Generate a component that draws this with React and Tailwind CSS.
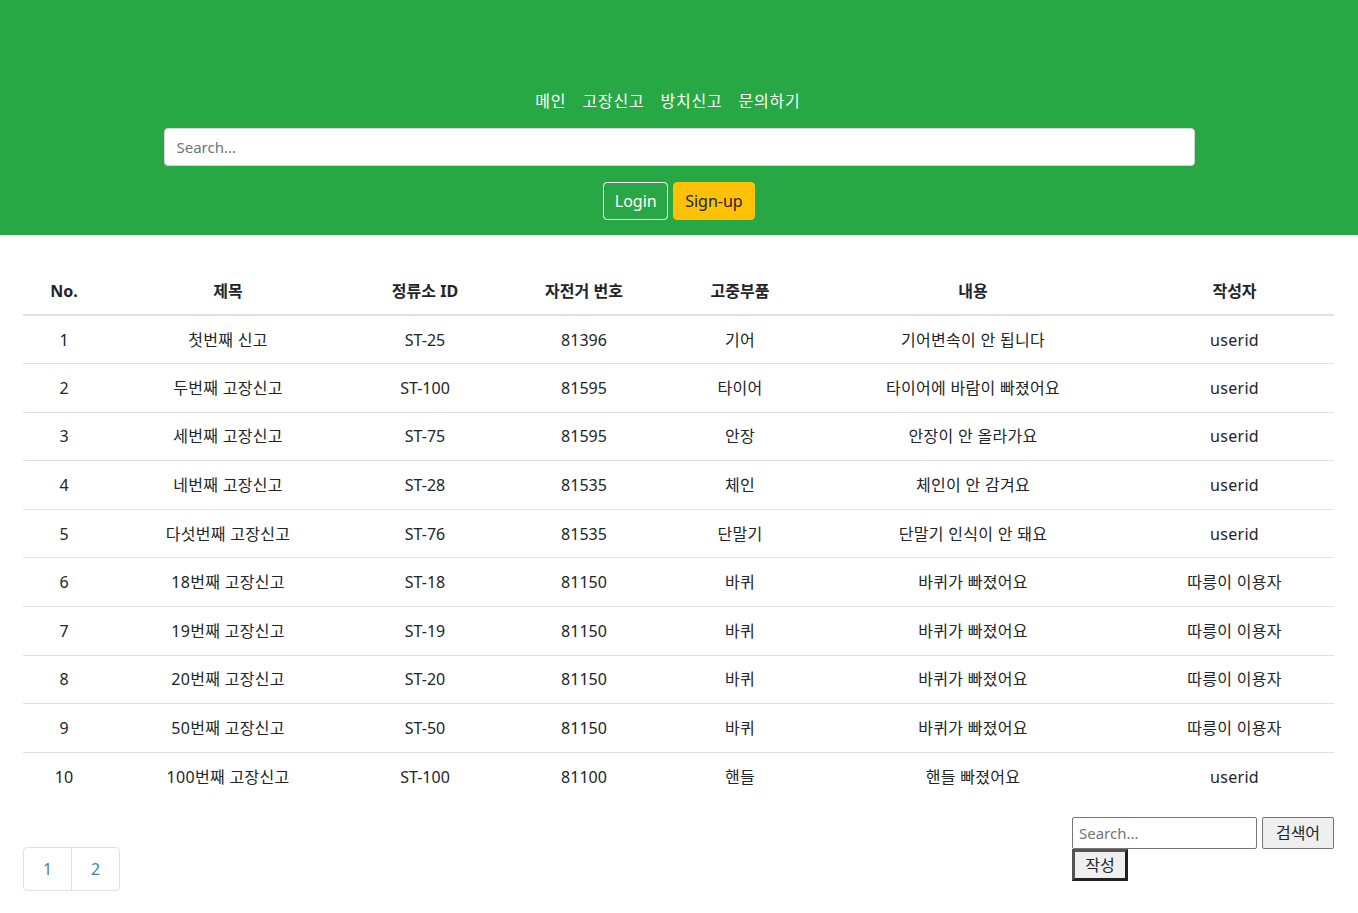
import { useState } from "react";

const reports = [
  { no: 1, title: "첫번째 신고", station: "ST-25", bike: "81396", part: "기어", content: "기어변속이 안 됩니다", writer: "userid" },
  { no: 2, title: "두번째 고장신고", station: "ST-100", bike: "81595", part: "타이어", content: "타이어에 바람이 빠졌어요", writer: "userid" },
  { no: 3, title: "세번째 고장신고", station: "ST-75", bike: "81595", part: "안장", content: "안장이 안 올라가요", writer: "userid" },
  { no: 4, title: "네번째 고장신고", station: "ST-28", bike: "81535", part: "체인", content: "체인이 안 감겨요", writer: "userid" },
  { no: 5, title: "다섯번째 고장신고", station: "ST-76", bike: "81535", part: "단말기", content: "단말기 인식이 안 돼요", writer: "userid" },
  { no: 6, title: "18번째 고장신고", station: "ST-18", bike: "81150", part: "바퀴", content: "바퀴가 빠졌어요", writer: "따릉이 이용자" },
  { no: 7, title: "19번째 고장신고", station: "ST-19", bike: "81150", part: "바퀴", content: "바퀴가 빠졌어요", writer: "따릉이 이용자" },
  { no: 8, title: "20번째 고장신고", station: "ST-20", bike: "81150", part: "바퀴", content: "바퀴가 빠졌어요", writer: "따릉이 이용자" },
  { no: 9, title: "50번째 고장신고", station: "ST-50", bike: "81150", part: "바퀴", content: "바퀴가 빠졌어요", writer: "따릉이 이용자" },
  { no: 10, title: "100번째 고장신고", station: "ST-100", bike: "81100", part: "핸들", content: "핸들 빠졌어요", writer: "userid" },
];

const menus = ["메인", "고장신고", "방치신고", "문의하기"];

export default function App() {
  const [keyword, setKeyword] = useState("");

  return (
    <div
      className="min-h-[913px] bg-white text-[#212529] text-base"
      style={{ fontFamily: '"Noto Sans", "Noto Sans CJK KR", sans-serif' }}
    >
      {/* Header */}
      <header className="bg-[#28a745] pt-[89px] pb-[15px] flex flex-col items-center">
        <nav className="flex gap-4 pr-[22px] h-6 items-center text-white text-base leading-6 tracking-[0.8px]">
          {menus.map((m) => (
            <a key={m} href="#" className="hover:underline">
              {m}
            </a>
          ))}
        </nav>
        <div className="w-[1031px] mt-[15px]">
          <input
            type="text"
            placeholder="Search..."
            className="w-full h-[38px] bg-white rounded-[4px] border border-[#ced4da] px-3 text-[15px] placeholder:text-[#6c757d] outline-none"
          />
        </div>
        <div className="flex gap-[5px] mt-[16px]">
          <button className="h-[38px] px-[10.5px] rounded-[4px] border border-white text-white text-base leading-6">
            Login
          </button>
          <button className="h-[38px] px-[11px] rounded-[4px] border border-[#ffc107] bg-[#ffc107] text-[#212529] text-base leading-6">
            Sign-up
          </button>
        </div>
      </header>

      {/* Table */}
      <main className="pl-[23px] pr-[24px] pt-[32px]">
        <table className="w-full border-collapse table-fixed">
          <colgroup>
            <col className="w-[82px]" />
            <col className="w-[246px]" />
            <col className="w-[148px]" />
            <col className="w-[170px]" />
            <col className="w-[142px]" />
            <col className="w-[324px]" />
            <col className="w-[199px]" />
          </colgroup>
          <thead>
            <tr className="border-b-2 border-[#dee2e6]">
              {["No.", "제목", "정류소 ID", "자전거 번호", "고중부품", "내용", "작성자"].map((h) => (
                <th key={h} className="h-[48px] text-center font-bold leading-6 align-middle">
                  {h}
                </th>
              ))}
            </tr>
          </thead>
          <tbody>
            {reports.map((r, i) => (
              <tr key={r.no} className={i < reports.length - 1 ? "border-b border-[#dee2e6]" : ""}>
                <td className="h-[48.6px] text-center leading-6 align-middle">{r.no}</td>
                <td className="text-center leading-6 align-middle tracking-[0.3px]">{r.title}</td>
                <td className="text-center leading-6 align-middle">{r.station}</td>
                <td className="text-center leading-6 align-middle">{r.bike}</td>
                <td className="text-center leading-6 align-middle tracking-[0.3px]">{r.part}</td>
                <td className="text-center leading-6 align-middle tracking-[0.3px]">{r.content}</td>
                <td className="text-center leading-6 align-middle tracking-[0.3px]">{r.writer}</td>
              </tr>
            ))}
          </tbody>
        </table>

        {/* Footer controls */}
        <div className="flex justify-between items-start mt-[16px]">
          <ul className="flex mt-[30px] border border-[#dee2e6] rounded-[4px] h-[44px]">
            <li className="w-[48px] flex items-center justify-center text-[#4a7fb5] text-base border-r border-[#dee2e6]">
              1
            </li>
            <li className="w-[47px] flex items-center justify-center text-[#4a7fb5] text-base">2</li>
          </ul>
          <div className="w-[262px] flex flex-col items-start">
            <div className="flex gap-[5px]">
              <input
                type="text"
                value={keyword}
                onChange={(e) => setKeyword(e.target.value)}
                placeholder="Search..."
                className="w-[185px] h-[32px] border border-[#767676] rounded-[2px] px-[6px] text-[15px] placeholder:text-[#757575] outline-none"
              />
              <button className="w-[72px] h-[32px] border border-[#767676] rounded-[2px] bg-[#efefef] text-base">
                검색어
              </button>
            </div>
            <button className="w-[56px] h-[32px] border-[3px] border-t-[#555] border-l-[#555] border-r-[#222] border-b-[#222] bg-[#efefef] text-base">
              작성
            </button>
          </div>
        </div>
      </main>
    </div>
  );
}
